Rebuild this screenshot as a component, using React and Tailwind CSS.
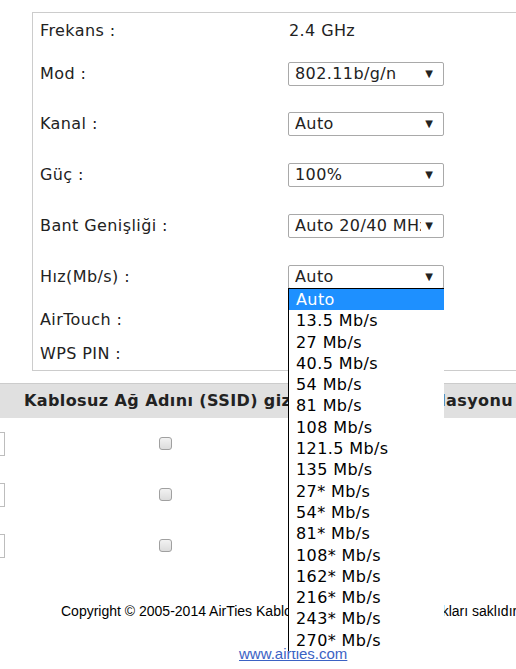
import React from "react";

const rates = [
    "Auto",
    "13.5 Mb/s",
    "27 Mb/s",
    "40.5 Mb/s",
    "54 Mb/s",
    "81 Mb/s",
    "108 Mb/s",
    "121.5 Mb/s",
    "135 Mb/s",
    "27* Mb/s",
    "54* Mb/s",
    "81* Mb/s",
    "108* Mb/s",
    "162* Mb/s",
    "216* Mb/s",
    "243* Mb/s",
    "270* Mb/s",
];

const Select = ({ value }) => (
    <div className="w-[156px] h-[24px] border border-[#a9a9a9] rounded-[2px] bg-white flex items-center pl-[6px] pr-[10px] overflow-hidden">
        <span className="flex-1 whitespace-nowrap overflow-hidden">{value}</span>
        <span className="text-[10px] leading-none ml-1 tracking-normal">▼</span>
    </div>
);

const Row = ({ label, h, children }) => (
    <div className={`flex items-center ${h}`}>
        <div className="w-[255px] pl-[7px] whitespace-nowrap">{label}</div>
        <div>{children}</div>
    </div>
);

const Checkbox = () => (
    <div className="w-[13px] h-[13px] rounded-[3px] border border-[#a0a0a0] bg-gradient-to-b from-[#f2f2f2] to-[#dcdcdc]" />
);

const ListRow = () => (
    <div className="flex items-center h-[51px]">
        <div className="w-[100px] h-[24px] -ml-[95px] border border-[#bdbdbd] bg-white" />
        <div className="ml-[154px]">
            <Checkbox />
        </div>
    </div>
);

export default function App() {
    return (
        <div className="relative w-[516px] h-[669px] overflow-hidden bg-white text-[#222] text-[16px] tracking-[0.4px] font-['DejaVu_Sans',Verdana,sans-serif]">
            {/* ================= SETTINGS PANEL ================= */}
            <div className="ml-[32px] mt-[12px] border-l border-t border-b border-[#cccccc]">
                <Row label="Frekans :" h="h-[36px]">
                    <span className="pl-[1px]">2.4 GHz</span>
                </Row>
                <Row label="Mod :" h="h-[49px]">
                    <Select value="802.11b/g/n" />
                </Row>
                <Row label="Kanal :" h="h-[51px]">
                    <Select value="Auto" />
                </Row>
                <Row label="Güç :" h="h-[51px]">
                    <Select value="100%" />
                </Row>
                <Row label="Bant Genişliği :" h="h-[51px]">
                    <Select value="Auto 20/40 MHz" />
                </Row>
                <Row label="Hız(Mb/s) :" h="h-[51px]">
                    <Select value="Auto" />
                </Row>
                <Row label="AirTouch :" h="h-[36px]" />
                <Row label="WPS PIN :" h="h-[32px]" />
            </div>

            {/* ================= SSID TABLE ================= */}
            <div className="mt-[12px] border-t border-[#cccccc] bg-[#e0e0e0] h-[35px] flex items-center justify-between pl-[24px] pr-[3px] font-bold whitespace-nowrap">
                <span>Kablosuz Ağ Adını (SSID) gizle</span>
                <span>İstemci İzolasyonu</span>
            </div>
            <ListRow />
            <ListRow />
            <ListRow />

            {/* ================= FOOTER ================= */}
            <div className="mt-[30px] pl-[61px] whitespace-nowrap text-[14px] tracking-normal text-black font-['Liberation_Sans',Arial,sans-serif]">
                Copyright © 2005-2014 AirTies Kablosuz İletişim A.Ş. Tüm hakları saklıdır.
            </div>
            <div className="mt-[21px] pl-[239px] text-[15px] tracking-normal font-['Liberation_Sans',Arial,sans-serif]">
                <a href="#" className="text-[#3b62c4] underline">www.airties.com</a>
            </div>

            {/* ================= OPEN DROPDOWN ================= */}
            <div className="absolute left-[288px] top-[288px] w-[156px] h-[363px] bg-white border-l border-t border-black border-r-[#7f9db9] overflow-hidden">
                {rates.map((r, i) => (
                    <div
                        key={r}
                        className={`h-[21.3px] leading-[21.3px] pl-[7px] whitespace-nowrap ${i === 0 ? "bg-[#1e90ff] text-white" : "text-black"}`}
                    >
                        {r}
                    </div>
                ))}
            </div>
        </div>
    );
}
